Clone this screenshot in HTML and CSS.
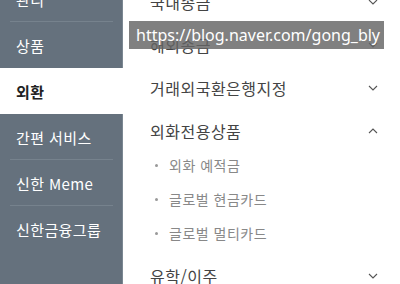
FILE: index.html
```html
<!DOCTYPE html>
<html lang="ko">

<head>
    <meta charset="UTF-8">
    <meta name="viewport" content="width=device-width, initial-scale=1.0">
    <title>외환</title>
    <link rel="stylesheet" href="styles.css">
</head>

<body>

    <div class="page">
        <!-- 왼쪽 메뉴 -->
        <ul class="side-menu">
            <li class="side-item">관리</li>
            <li class="side-item">상품</li>
            <li class="side-item active">외환</li>
            <li class="side-item">간편 서비스</li>
            <li class="side-item">신한 Meme</li>
            <li class="side-item">신한금융그룹</li>
        </ul>

        <!-- 오른쪽 메뉴 -->
        <div class="sub-menu">
            <div class="menu-row">
                <span>국내송금</span>
                <svg class="arrow" width="10" height="6" viewBox="0 0 10 6"><polyline points="1,1 5,5 9,1" /></svg>
            </div>
            <div class="menu-row">
                <span>해외송금</span>
                <svg class="arrow" width="10" height="6" viewBox="0 0 10 6"><polyline points="1,1 5,5 9,1" /></svg>
            </div>
            <div class="menu-row">
                <span>거래외국환은행지정</span>
                <svg class="arrow" width="10" height="6" viewBox="0 0 10 6"><polyline points="1,1 5,5 9,1" /></svg>
            </div>
            <div class="menu-row">
                <span>외화전용상품</span>
                <svg class="arrow" width="10" height="6" viewBox="0 0 10 6"><polyline points="1,5 5,1 9,5" /></svg>
            </div>
            <ul class="child-list">
                <li>외화 예적금</li>
                <li>글로벌 현금카드</li>
                <li>글로벌 멀티카드</li>
            </ul>
            <div class="menu-row">
                <span>유학/이주</span>
                <svg class="arrow" width="10" height="6" viewBox="0 0 10 6"><polyline points="1,1 5,5 9,1" /></svg>
            </div>
        </div>
    </div>

    <!-- 워터마크 -->
    <div class="watermark">https://blog.naver.com/gong_bly</div>

</body>

</html>
```

FILE: styles.css
```css
* {
    box-sizing: border-box;
    font-family: 'Noto Sans CJK KR', 'Noto Sans', sans-serif;
}

body {
    margin: 0;
    padding: 0;
    background-color: #fff;
    overflow: hidden;
}

ul {
    list-style: none;
    margin: 0;
    padding: 0;
}

.page {
    display: flex;
    height: 284px;
}

.side-menu {
    width: 123px;
    flex-shrink: 0;
    background-color: #65717d;
    border-right: 1px solid #7b8792;
    margin-top: -24px;
    height: 308px;
}

.side-item {
    height: 46px;
    display: flex;
    align-items: center;
    padding-left: 16px;
    font-size: 15px;
    letter-spacing: 0.4px;
    color: #fff;
    position: relative;
}

.side-item::after {
    content: "";
    position: absolute;
    left: 10px;
    right: 9px;
    bottom: 0;
    border-bottom: 1px solid #76828d;
}

/* 선택된 메뉴 */
.side-item.active {
    background-color: #fff;
    color: #222;
    font-weight: bold;
    margin-right: -1px;
}

.side-item.active::after,
.side-item:nth-child(2)::after,
.side-item:last-child::after {
    display: none;
}

.sub-menu {
    flex: 1;
    margin-top: -20px;
    padding-left: 27px;
    padding-right: 22px;
}

.menu-row {
    height: 43px;
    display: flex;
    align-items: center;
    justify-content: space-between;
    font-size: 16px;
    letter-spacing: 0.5px;
    color: #444;
}

.arrow polyline {
    fill: none;
    stroke: #555;
    stroke-width: 1.1;
}

.child-list {
    margin-top: -4px;
    padding-bottom: 4px;
}

.child-list li {
    height: 34px;
    display: flex;
    align-items: center;
    padding-left: 5px;
    font-size: 14px;
    letter-spacing: 0.5px;
    color: #888;
}

.child-list li::before {
    content: "";
    width: 3px;
    height: 3px;
    border-radius: 50%;
    background-color: #999;
    margin-right: 11px;
}

.watermark {
    position: absolute;
    left: 129px;
    top: 21px;
    width: 255px;
    height: 28px;
    padding-left: 7px;
    line-height: 28px;
    background-color: rgba(100, 100, 100, 0.82);
    color: #fff;
    font-family: 'Noto Sans', sans-serif;
    font-size: 16px;
    white-space: nowrap;
}
```
